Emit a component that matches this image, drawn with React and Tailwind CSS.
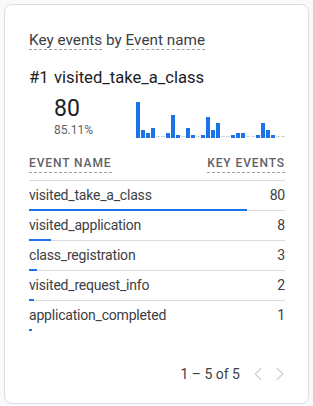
import React from 'react';
import { ChevronLeft, ChevronRight } from 'lucide-react';

const bars = [36, 8, 5, 10, 0, 0, 5, 23, 3, 0, 10, 3, 0, 3, 21, 8, 15, 0, 0, 3, 5, 5, 0, 0, 3, 15, 8, 3, 0, 0];

const rows = [
  { name: 'visited_take_a_class', value: 80 },
  { name: 'visited_application', value: 8 },
  { name: 'class_registration', value: 3 },
  { name: 'visited_request_info', value: 2 },
  { name: 'application_completed', value: 1 },
];

const total = rows.reduce((s, r) => s + r.value, 0);

function MiniChart() {
  return (
    <div className="flex items-end gap-px h-[37px]">
      {bars.map((h, i) =>
        h > 0 ? (
          <div key={i} className="w-[4px] bg-[#1a73e8]" style={{ height: h + 'px' }} />
        ) : (
          <div key={i} className="w-[4px] h-px mb-px bg-[#d2d4d7]" />
        )
      )}
    </div>
  );
}

export default function App() {
  return (
    <div className="w-[313px] h-[406px] p-[4px] bg-[#f8f9fa] font-['Roboto',sans-serif]">
      <div className="h-[400px] bg-white border border-[#dadce0] rounded-[8px] pl-6 pr-[23px] pt-[26px]">
        {/* title */}
        <div className="text-[15.3px] leading-[18px] text-[#3c4043]">
          <span className="inline-block leading-[17px] border-b border-dashed border-[#9aa0a6]">Key events</span>
          <span> by </span>
          <span className="inline-block leading-[17px] border-b border-dashed border-[#9aa0a6]">Event name</span>
        </div>

        <div className="mt-[16px] leading-[24px] text-[16.6px] text-[#202124] flex">
          <span className="w-[25px]">#1</span>
          <span>visited_take_a_class</span>
        </div>

        <div className="mt-[6px] flex items-end">
          <div className="w-[107px] pl-[25px]">
            <div className="text-[23px] leading-[26px] text-[#202124]">80</div>
            <div className="text-[12px] leading-[16px] text-[#5f6368]">85.11%</div>
          </div>
          <MiniChart />
        </div>

        {/* table header */}
        <div className="mt-[17px] pb-[7px] border-b border-[#dadce0] flex justify-between text-[12px] leading-[18px] font-medium tracking-[0.9px] text-[#5f6368]">
          <span className="inline-block leading-[17px] border-b border-dashed border-[#9aa0a6]">EVENT NAME</span>
          <span className="inline-block leading-[17px] border-b border-dashed border-[#9aa0a6]">KEY EVENTS</span>
        </div>

        {rows.map((r, i) => (
          <div key={r.name} className={i < rows.length - 1 ? 'border-b border-[#dadce0]' : ''}>
            <div className="h-[28px] flex items-center justify-between text-[14px] tracking-[-0.2px] text-[#3c4043]">
              <span>{r.name}</span>
              <span>{r.value}</span>
            </div>
            <div className="h-[2px] -mb-px relative bg-[#1a73e8]" style={{ width: (r.value / total) * 100 + '%' }} />
          </div>
        ))}

        {/* pagination */}
        <div className="mt-[32px] flex items-center justify-end text-[14px] text-[#3c4043] leading-[24px]">
          <span className="mr-[7px]">1 – 5 of 5</span>
          <ChevronLeft size={22} strokeWidth={1.5} className="text-[#d0d3d6]" />
          <ChevronRight size={22} strokeWidth={1.5} className="text-[#d0d3d6] -mr-[6px]" />
        </div>
      </div>
    </div>
  );
}
